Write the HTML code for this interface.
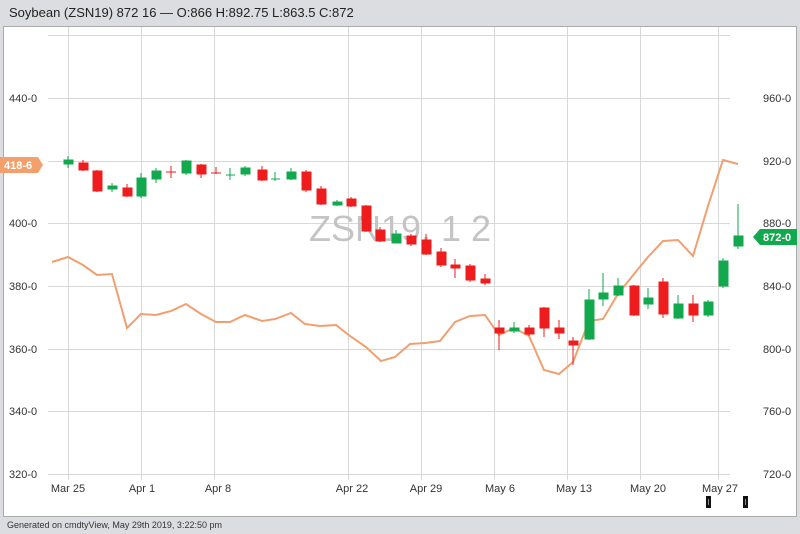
<!DOCTYPE html>
<html><head><meta charset="utf-8"><style>
html,body{margin:0;padding:0;width:800px;height:534px;overflow:hidden;background:#dcdde0;font-family:"Liberation Sans",Arial,sans-serif}
</style></head><body>
<svg width="800" height="534" xmlns="http://www.w3.org/2000/svg" style="position:absolute;left:0;top:0">
<rect x="0" y="0" width="800" height="534" fill="#dcdde0"/>
<text x="9" y="17" font-size="13" fill="#222" font-family="Liberation Sans, Arial, sans-serif">Soybean (ZSN19) 872 16 — O:866 H:892.75 L:863.5 C:872</text>
<rect x="3.5" y="26.5" width="793" height="490" fill="#fff" stroke="#aaa"/>
<g stroke="#d8d8d8" stroke-width="1">
<line x1="48" y1="35.5" x2="730" y2="35.5"/>
<line x1="48" y1="98.5" x2="730" y2="98.5"/>
<line x1="48" y1="161.5" x2="730" y2="161.5"/>
<line x1="48" y1="223.5" x2="730" y2="223.5"/>
<line x1="48" y1="286.5" x2="730" y2="286.5"/>
<line x1="48" y1="349.5" x2="730" y2="349.5"/>
<line x1="48" y1="411.5" x2="730" y2="411.5"/>
<line x1="48" y1="474.5" x2="730" y2="474.5"/>
<line x1="68.5" y1="27" x2="68.5" y2="480"/>
<line x1="141.5" y1="27" x2="141.5" y2="480"/>
<line x1="214.5" y1="27" x2="214.5" y2="480"/>
<line x1="348.5" y1="27" x2="348.5" y2="480"/>
<line x1="421.5" y1="27" x2="421.5" y2="480"/>
<line x1="494.5" y1="27" x2="494.5" y2="480"/>
<line x1="567.5" y1="27" x2="567.5" y2="480"/>
<line x1="640.5" y1="27" x2="640.5" y2="480"/>
<line x1="718.5" y1="27" x2="718.5" y2="480"/>
</g>
<g font-size="11" fill="#333" font-family="Liberation Sans, Arial, sans-serif">
<text x="9" y="102">440-0</text><text x="9" y="227">400-0</text><text x="9" y="290">380-0</text>
<text x="9" y="353">360-0</text><text x="9" y="415">340-0</text><text x="9" y="478">320-0</text>
<text x="763" y="102">960-0</text><text x="763" y="165">920-0</text><text x="763" y="227">880-0</text>
<text x="763" y="290">840-0</text><text x="763" y="353">800-0</text><text x="763" y="415">760-0</text><text x="763" y="478">720-0</text>
</g>
<g font-size="11" fill="#333" text-anchor="middle" font-family="Liberation Sans, Arial, sans-serif">
<text x="68" y="492">Mar 25</text><text x="142" y="492">Apr 1</text><text x="218" y="492">Apr 8</text>
<text x="352" y="492">Apr 22</text><text x="426" y="492">Apr 29</text><text x="500" y="492">May 6</text>
<text x="574" y="492">May 13</text><text x="648" y="492">May 20</text><text x="720" y="492">May 27</text>
</g>
<text x="400" y="241" font-size="36" fill="#c4c4c4" text-anchor="middle" font-family="Liberation Sans, Arial, sans-serif">ZSN19, 1 2</text>
<polyline fill="none" stroke="#f0a070" stroke-width="2" points="52,262 68,257 83,265 97,275 112,274 127,328 141,314 156,315 171,311 186,304 201,314 216,322 230,322 245,315 262,321 275,319 291,313 305,324 320,326 336,325 350,336 366,347 381,361 395,357 410,344 425,343 440,341 455,322 470,316 485,315 499,335 514,328 529,336 544,370 559,374 573,362 589,321 603,319 618,294 634,274 648,257 663,241 678,240 693,256 708,206 723,160 738,164"/>
<g stroke-width="1">
<!-- G green, R red: wick line + body rect -->
<g stroke="#11a84e" fill="#11a84e">
<line x1="68" y1="156" x2="68" y2="168"/><rect x="64" y="160" width="9" height="4"/>
<line x1="112" y1="183" x2="112" y2="192"/><rect x="108" y="186" width="9" height="3"/>
<line x1="141" y1="173" x2="141" y2="198"/><rect x="137" y="178" width="9" height="18"/>
<line x1="156" y1="168" x2="156" y2="183"/><rect x="152" y="171" width="9" height="8"/>
<line x1="186" y1="160" x2="186" y2="175"/><rect x="182" y="161" width="9" height="12"/>
<line x1="230" y1="168" x2="230" y2="180"/><line x1="226" y1="175" x2="235" y2="175"/>
<line x1="245" y1="166" x2="245" y2="176"/><rect x="241" y="168" width="9" height="6"/>
<line x1="275" y1="172" x2="275" y2="181"/><line x1="271" y1="179" x2="280" y2="179"/>
<line x1="291" y1="168" x2="291" y2="180"/><rect x="287" y="172" width="9" height="7"/>
<line x1="337" y1="200" x2="337" y2="206"/><rect x="333" y="202" width="9" height="3"/>
<line x1="396" y1="230" x2="396" y2="243"/><rect x="392" y="234" width="9" height="9"/>
<line x1="514" y1="322" x2="514" y2="333"/><rect x="510" y="328" width="9" height="3"/>
<line x1="589" y1="289" x2="589" y2="340"/><rect x="585" y="300" width="9" height="39"/>
<line x1="603" y1="273" x2="603" y2="306"/><rect x="599" y="293" width="9" height="6"/>
<line x1="618" y1="278" x2="618" y2="296"/><rect x="614" y="286" width="9" height="9"/>
<line x1="648" y1="288" x2="648" y2="309"/><rect x="644" y="298" width="9" height="6"/>
<line x1="678" y1="295" x2="678" y2="319"/><rect x="674" y="304" width="9" height="14"/>
<line x1="708" y1="300" x2="708" y2="317"/><rect x="704" y="302" width="9" height="13"/>
<line x1="723" y1="258" x2="723" y2="288"/><rect x="719" y="261" width="9" height="25"/>
<line x1="738" y1="204" x2="738" y2="249"/><rect x="734" y="236" width="9" height="10"/>
</g>
<g stroke="#ee1c1c" fill="#ee1c1c">
<line x1="83" y1="160" x2="83" y2="171"/><rect x="79" y="163" width="9" height="7"/>
<line x1="97" y1="170" x2="97" y2="192"/><rect x="93" y="171" width="9" height="20"/>
<line x1="127" y1="184" x2="127" y2="197"/><rect x="123" y="188" width="9" height="8"/>
<line x1="171" y1="166" x2="171" y2="178"/><line x1="166" y1="172" x2="176" y2="172"/>
<line x1="201" y1="164" x2="201" y2="178"/><rect x="197" y="165" width="9" height="9"/>
<line x1="216" y1="167" x2="216" y2="174"/><line x1="211" y1="173" x2="221" y2="173"/>
<line x1="262" y1="166" x2="262" y2="181"/><rect x="258" y="170" width="9" height="10"/>
<line x1="306" y1="170" x2="306" y2="192"/><rect x="302" y="172" width="9" height="18"/>
<line x1="321" y1="186" x2="321" y2="205"/><rect x="317" y="189" width="9" height="15"/>
<line x1="351" y1="197" x2="351" y2="207"/><rect x="347" y="199" width="9" height="7"/>
<line x1="366" y1="205" x2="366" y2="232"/><rect x="362" y="206" width="9" height="25"/>
<line x1="380" y1="227" x2="380" y2="242"/><rect x="376" y="230" width="9" height="11"/>
<line x1="411" y1="234" x2="411" y2="246"/><rect x="407" y="236" width="9" height="8"/>
<line x1="426" y1="234" x2="426" y2="255"/><rect x="422" y="240" width="9" height="14"/>
<line x1="441" y1="248" x2="441" y2="267"/><rect x="437" y="252" width="9" height="13"/>
<line x1="455" y1="259" x2="455" y2="278"/><rect x="451" y="265" width="9" height="3"/>
<line x1="470" y1="264" x2="470" y2="282"/><rect x="466" y="266" width="9" height="14"/>
<line x1="485" y1="274" x2="485" y2="285"/><rect x="481" y="279" width="9" height="4"/>
<line x1="499" y1="320" x2="499" y2="350"/><rect x="495" y="328" width="9" height="5"/>
<line x1="529" y1="325" x2="529" y2="336"/><rect x="525" y="328" width="9" height="6"/>
<line x1="544" y1="307" x2="544" y2="337"/><rect x="540" y="308" width="9" height="20"/>
<line x1="559" y1="320" x2="559" y2="339"/><rect x="555" y="328" width="9" height="5"/>
<line x1="573" y1="337" x2="573" y2="365"/><rect x="569" y="341" width="9" height="4"/>
<line x1="634" y1="285" x2="634" y2="316"/><rect x="630" y="286" width="9" height="29"/>
<line x1="663" y1="278" x2="663" y2="318"/><rect x="659" y="282" width="9" height="32"/>
<line x1="693" y1="295" x2="693" y2="322"/><rect x="689" y="304" width="9" height="11"/>
</g>
</g>
<path d="M0,157 H38 L43,165 L38,173 H0 Z" fill="#f4a06c"/>
<text x="4" y="169" font-size="11" fill="#fff" font-weight="bold" font-family="Liberation Sans, Arial, sans-serif">418-6</text>
<path d="M797,229 H760 L753,237 L760,245 H797 Z" fill="#11a84e"/>
<text x="763" y="241" font-size="11" fill="#fff" font-weight="bold" font-family="Liberation Sans, Arial, sans-serif">872-0</text>
<rect x="706" y="496" width="5" height="12" fill="#111"/><rect x="708" y="499" width="1" height="6" fill="#888"/>
<rect x="743" y="496" width="5" height="12" fill="#111"/><rect x="745" y="499" width="1" height="6" fill="#888"/>
<text x="7" y="528" font-size="9" fill="#333" font-family="Liberation Sans, Arial, sans-serif">Generated on cmdtyView, May 29th 2019, 3:22:50 pm</text>
</svg>
</body></html>
